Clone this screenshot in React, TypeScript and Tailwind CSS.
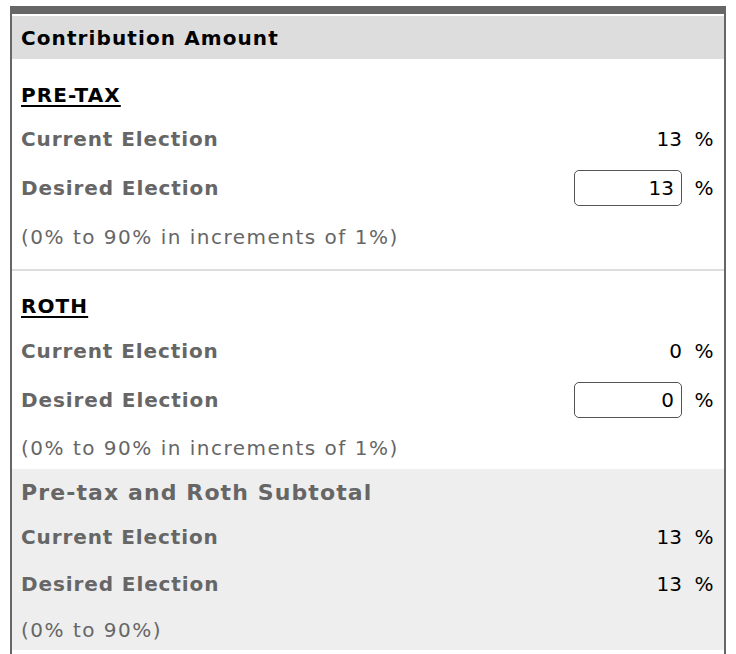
import React from "react";

const font = { fontFamily: '"DejaVu Sans", Verdana, sans-serif' };

function Pct() {
  return <span className="ml-[11px] inline-block w-[22px] text-center tracking-normal text-black">%</span>;
}

function ValueRow({ label, value, h }: { label: string; value: string; h: string }) {
  return (
    <div className={`flex items-center justify-between ${h}`}>
      <span className="font-bold tracking-[0.9px] text-[#666]">{label}</span>
      <span className="flex items-center text-black tracking-normal">
        <span>{value}</span>
        <Pct />
      </span>
    </div>
  );
}

function InputRow({ label, value, h }: { label: string; value: string; h: string }) {
  return (
    <div className={`flex items-center justify-between ${h}`}>
      <span className="font-bold tracking-[0.9px] text-[#666]">{label}</span>
      <div className="flex items-center">
        <input
          readOnly
          value={value}
          className="h-[36px] w-[108px] rounded-[5px] border-[1.5px] border-[#555] bg-white pr-[7px] text-right text-black outline-none"
          style={font}
        />
        <Pct />
      </div>
    </div>
  );
}

export default function App() {
  return (
    <div className="h-[654px] w-[736px] overflow-hidden bg-white pt-[6px] text-[20px]" style={font}>
      <div className="ml-[10px] w-[716px] h-[700px] border-x-2 border-t-8 border-[#666] pt-[2px]">
        <div className="flex h-[43px] items-center bg-[#dddddd] px-[9px]">
          <span className="font-bold tracking-[1.1px] text-black">Contribution Amount</span>
        </div>

        <div className="px-[9px] pt-[14px]">
          <div className="flex h-[44px] items-center">
            <span className="font-bold tracking-[1.1px] text-black underline decoration-2 underline-offset-[3px]">PRE-TAX</span>
          </div>
          <ValueRow label="Current Election" value="13" h="h-[44px]" />
          <InputRow label="Desired Election" value="13" h="h-[54px]" />
          <div className="flex h-[44px] items-center tracking-[1.5px] text-[#666]">(0% to 90% in increments of 1%)</div>
        </div>

        <div className="mt-[10px] h-[2px] bg-[#dddddd]" />

        <div className="px-[9px] pt-[13px]">
          <div className="flex h-[44px] items-center">
            <span className="font-bold tracking-[1.1px] text-black underline decoration-2 underline-offset-[3px]">ROTH</span>
          </div>
          <ValueRow label="Current Election" value="0" h="h-[46px]" />
          <InputRow label="Desired Election" value="0" h="h-[52px]" />
          <div className="flex h-[43px] items-center tracking-[1.5px] text-[#666]">(0% to 90% in increments of 1%)</div>
        </div>

        <div className="bg-[#eeeeee] px-[9px]">
          <div className="flex h-[46px] items-center">
            <span className="text-[22px] font-bold tracking-[1.1px] text-[#666]">Pre-tax and Roth Subtotal</span>
          </div>
          <ValueRow label="Current Election" value="13" h="h-[44px]" />
          <ValueRow label="Desired Election" value="13" h="h-[50px]" />
          <div className="flex h-[41px] items-center tracking-[1.5px] text-[#666]">(0% to 90%)</div>
        </div>
      </div>
    </div>
  );
}
